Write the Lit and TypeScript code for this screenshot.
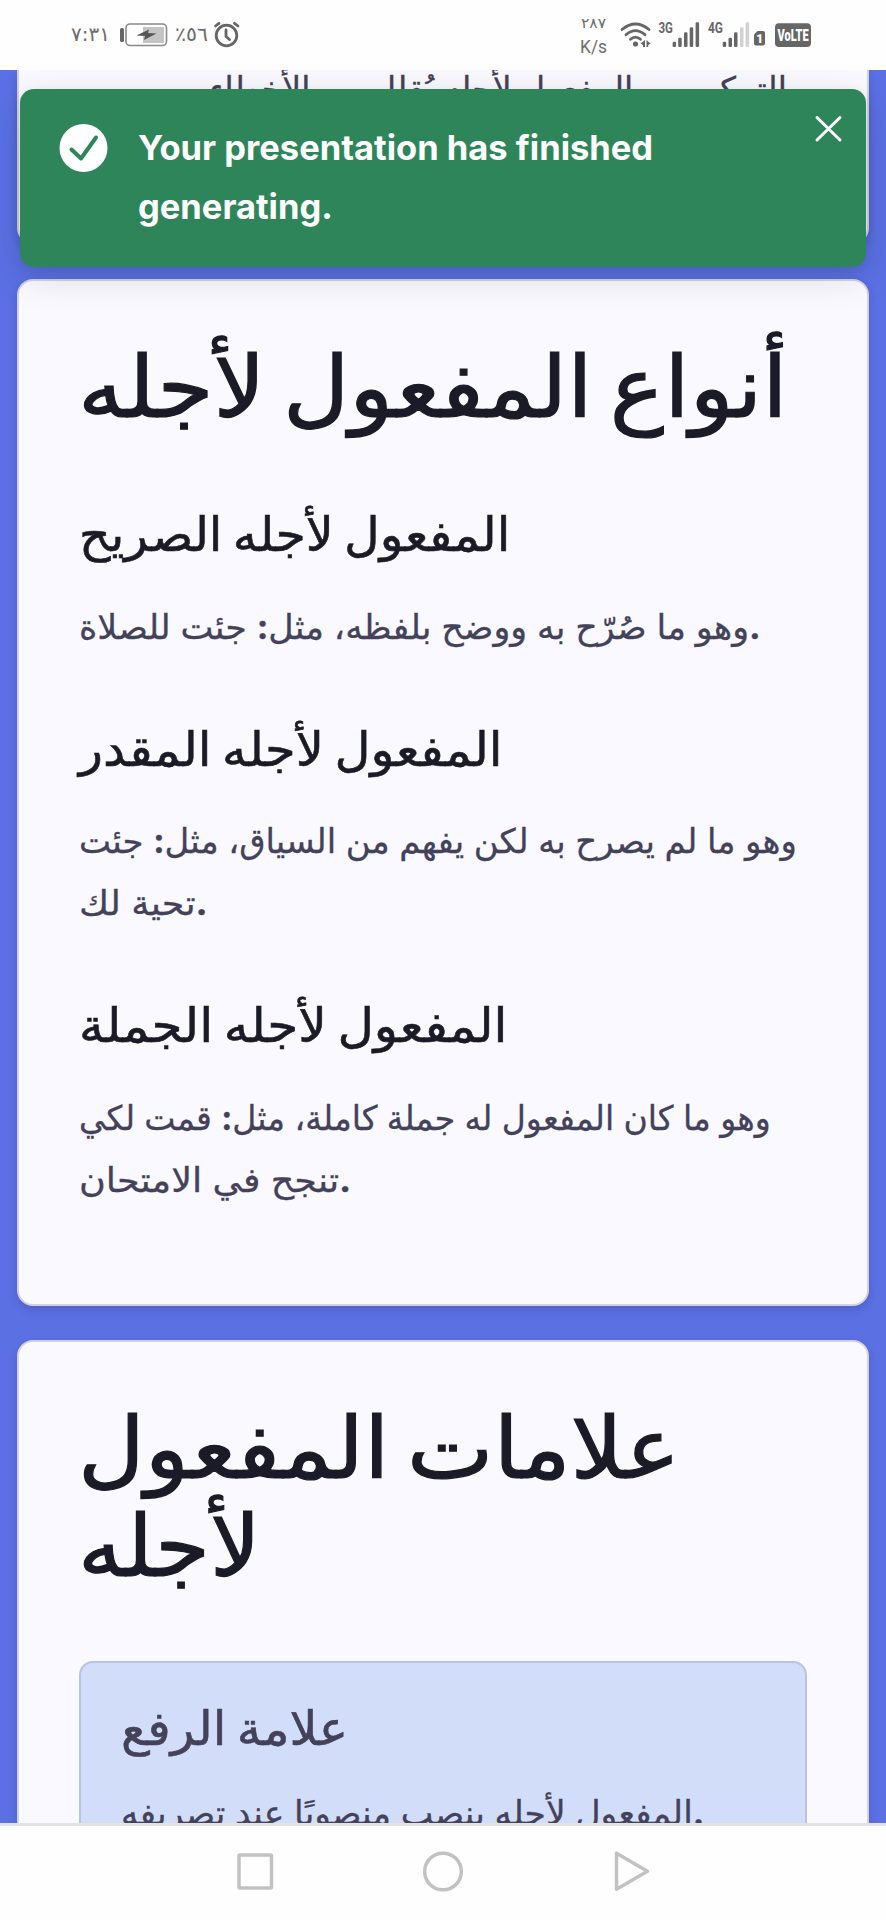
import { LitElement, html, css, svg } from "lit";

class FitLine extends LitElement {
  static properties = { w: { type: Number }, text: {}, kx: { state: true } };
  w = 100; text = ""; kx = 1;
  static styles = css`
    :host { display: block; direction: ltr; white-space: nowrap; }
    .run { display: inline-block; transform-origin: 0 50%; }
    .mark { font-weight: 700; }
  `;
  firstUpdated() {
    const el = this.renderRoot.querySelector(".run") as HTMLElement;
    this.kx = this.w / el.offsetWidth;
  }
  render() {
    const parts = this.text.split(/([.:])/).map((p) => (p === "." || p === ":" ? html`<span class="mark">${p}</span>` : p));
    return html`<span class="run" style="transform:scaleX(${this.kx})">${parts}</span>`;
  }
}
customElements.define("fit-line", FitLine);

const BASE = 47;
const bars = (xs: number[], lit: number) =>
  xs.map((x, i) => {
    const top = [41.7, 37.7, 32.3, 27.3, 22.3][i];
    return svg`<rect x=${x} y=${top} width="3.5" height=${BASE - top} rx="1.3" fill=${i < lit ? "#666" : "#d2d2d2"}></rect>`;
  });

class AppRoot extends LitElement {
  static styles = css`
    :host { display: flex; flex-direction: column; width: 886px; height: 1920px; overflow: hidden; position: relative; background: #fff; font-family: "DejaVu Sans", sans-serif; }
    * { box-sizing: border-box; }
    svg { display: block; }
    .status { height: 70px; flex: none; background: #fefefe; }
    .digits { font-family: "DejaVu Sans", sans-serif; direction: ltr; unicode-bidi: bidi-override; fill: #6c6c6c; }
    .rate { font-family: Roboto, sans-serif; font-size: 18.5px; fill: #6c6c6c; }
    .net { font-family: Roboto, "Liberation Sans", sans-serif; font-weight: 700; font-size: 15px; fill: #666; }
    .chip { font-family: Roboto, "Liberation Sans", sans-serif; font-weight: 900; fill: #fff; }
    .page { height: 1753px; flex: none; overflow: hidden; background: #5b70e3; padding: 0 17px; display: flex; flex-direction: column; }
    .card { flex: none; background: #faf9ff; border: 2px solid #d3d2dc; border-radius: 16px; box-shadow: 0 4px 8px rgba(30,30,90,.18); padding: 0 60px; color: #1b1a27; }
    .card.prev { height: 174px; border-top: 0; border-radius: 0 0 16px 16px; margin-bottom: 35px; padding-left: 190px; }
    .prev .body { margin-top: -12px; }
    .main { height: 1027px; margin-bottom: 34px; padding-top: 58px; }
    .next { height: 620px; padding-top: 58px; }
    .title { font-size: 85px; line-height: 98px; height: 98px; margin-left: -1px; word-spacing: -11px; -webkit-text-stroke: 1.2px currentColor; }
    .sub { font-size: 47px; line-height: 60px; height: 60px; word-spacing: -5px; -webkit-text-stroke: .6px currentColor; }
    .body { font: 34px/62px Inter, "DejaVu Sans", sans-serif; height: 62px; color: #43425a; -webkit-text-stroke: .3px currentColor; }
    .box { margin-top: 65px; height: 220px; border: 2px solid #b7c2e6; border-radius: 14px; background: #d2ddf9; padding: 36px 40px; }
    .box .sub { color: #43425a; margin-bottom: 22.5px; }
    .nav { flex: 1; border-top: 3px solid #e3e3e6; background: #fefefe; }
    .toast { position: absolute; left: 20px; top: 89px; width: 846px; height: 178px; border-radius: 14px; background: #2f855a; color: #fff; display: flex; align-items: flex-start; padding: 29px 23px 0 39px; box-shadow: 0 10px 40px rgba(0,0,0,.12), 0 4px 12px rgba(0,0,0,.08); font: 700 34.5px/59px Inter, sans-serif; }
    .ok { margin: 5px 30px 0 0; flex: none; }
    .msg { flex: 1; }
    .x { margin-top: -3px; flex: none; }
    .first { margin-top: 68px; } .g1 { margin-top: 62px; } .g2 { margin-top: 30.5px; }
  `;
  render() {
    return html`
      <div class="status"><svg width="886" height="70" viewBox="0 0 886 70" fill="none">
        <text class="digits" x="71" y="41" font-size="20" textLength="39" lengthAdjust="spacingAndGlyphs">٧:٣١</text>
        <rect x="120" y="28" width="4" height="14" rx="1.5" fill="#666"></rect>
        <rect x="126" y="24" width="40.5" height="21.5" rx="4" stroke="#8a8a8a" stroke-width="1.6"></rect>
        <rect x="143" y="27" width="21" height="16" fill="#c4c4c4"></rect>
        <path d="M136.5 35.500L149 29.500L148 33L156.500 33.500L144 40L145 36Z" fill="#555"></path>
        <text class="digits" x="175" y="41" font-size="20" textLength="33" lengthAdjust="spacingAndGlyphs">٪٥٦</text>
        <g stroke="#666" stroke-width="2.800" stroke-linecap="round" stroke-linejoin="round">
          <circle cx="226.500" cy="35.500" r="10.300"></circle>
          <path d="M226 30V36.500L229.500 39.500M215.500 26L219 23.300M234.500 23.300L238 26"></path>
        </g>
        <text class="digits" x="581" y="28" font-size="14" textLength="25" lengthAdjust="spacingAndGlyphs">٢٨٧</text>
        <text class="rate" x="580" y="53" textLength="27" lengthAdjust="spacingAndGlyphs">K/s</text>
        <g stroke="#666" stroke-width="2.800" stroke-linecap="round">
          <path d="M622 29.500Q635.500 18.500 649 29.500M626 34.800Q635.500 26.500 645 34.800M630.500 39.300Q635.500 35 640.500 39.300"></path>
        </g>
        <circle cx="635.500" cy="44" r="2.600" fill="#666"></circle>
        <path d="M640.500 43.500L645 40V47H643V45ZM646.500 40V47H648.200V45L650.500 43.500Z" fill="#666"></path>
        <text class="net" x="658.500" y="33" textLength="14.500" lengthAdjust="spacingAndGlyphs">3G</text>
        ${bars([672.6, 678.2, 684, 689.7, 695.6], 5)}
        <text class="net" x="708" y="33" textLength="15" lengthAdjust="spacingAndGlyphs">4G</text>
        ${bars([722.7, 728.5, 734, 740, 745.6], 3)}
        <path d="M757.500 31H763Q765 31 765 33V43.500Q765 45.500 763 45.500H756Q754 45.500 754 43.500V34.500Z" fill="#666"></path>
        <text class="chip" x="756.300" y="43" font-size="12">1</text>
        <rect x="775" y="23.300" width="36" height="23.700" rx="4" fill="#666"></rect>
        <text class="chip" x="777.500" y="41" font-size="16" textLength="31" lengthAdjust="spacingAndGlyphs">VoLTE</text>
      </svg></div>
      <div class="page">
        <section class="card prev"><fit-line class="body" w="578" text="التمكن من المفعول لأجله يُقلل من الأخطاء"></fit-line></section>
        <section class="card main">
          <fit-line class="title" w="710" text="أنواع المفعول لأجله"></fit-line>
          <fit-line class="sub first" w="431" text="المفعول لأجله الصريح"></fit-line>
          <fit-line class="body g2" w="682" text="وهو ما صُرّح به ووضح بلفظه، مثل: جئت للصلاة."></fit-line>
          <fit-line class="sub g1" w="424" text="المفعول لأجله المقدر"></fit-line>
          <fit-line class="body g2" w="718" text="وهو ما لم يصرح به لكن يفهم من السياق، مثل: جئت"></fit-line>
          <fit-line class="body" w="129" text="تحية لك."></fit-line>
          <fit-line class="sub g1" w="429" text="المفعول لأجله الجملة"></fit-line>
          <fit-line class="body g2" w="692" text="وهو ما كان المفعول له جملة كاملة، مثل: قمت لكي"></fit-line>
          <fit-line class="body" w="272" text="تنجح في الامتحان."></fit-line>
        </section>
        <section class="card next">
          <fit-line class="title" w="602" text="علامات المفعول"></fit-line>
          <fit-line class="title" w="183" text="لأجله"></fit-line>
          <div class="box">
            <fit-line class="sub" w="227" text="علامة الرفع"></fit-line>
            <fit-line class="body" w="583" text="المفعول لأجله ينصب منصوبًا عند تصريفه."></fit-line>
          </div>
        </section>
      </div>
      <div class="nav"><svg width="886" height="94" viewBox="0 1826 886 94" fill="none" stroke="#c2c2c2" stroke-width="3.500" stroke-linejoin="round">
        <rect x="239" y="1855" width="32.500" height="33" rx="1"></rect>
        <circle cx="443" cy="1871.500" r="18.300"></circle>
        <path d="M616.500 1853.200V1889.300L647.500 1871.300Z"></path>
      </svg></div>
      <div class="toast">
        <svg class="ok" width="49" height="49" viewBox="0 0 49 49" fill="none"><circle cx="24.500" cy="25" r="24" fill="#fff"></circle><path d="M12.500 26.500L22 35.500L37 14.500" stroke="#2f855a" stroke-width="4" stroke-linecap="round" stroke-linejoin="round"></path></svg>
        <div class="msg">Your presentation has finished<br>generating.</div>
        <svg class="x" width="30" height="30" viewBox="0 0 30 30" stroke="#fff" stroke-width="3" stroke-linecap="round"><path d="M4 2.500L27 25M27 2.500L4 25"></path></svg>
      </div>`;
  }
}
customElements.define("app-root", AppRoot);
